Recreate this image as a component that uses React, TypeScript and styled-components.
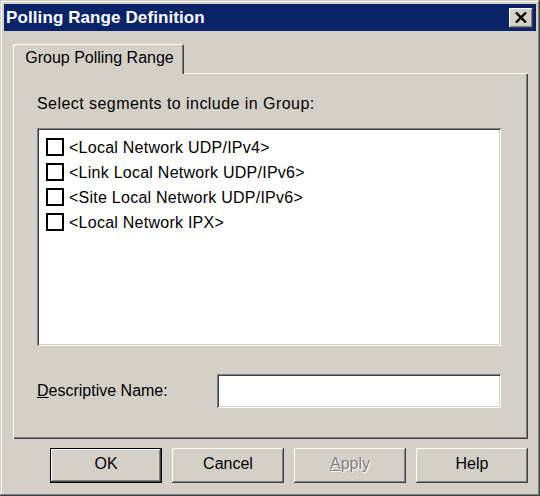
import React from 'react';
import styled, { createGlobalStyle } from 'styled-components';

const GlobalStyle = createGlobalStyle`
  html, body {
    margin: 0;
    padding: 0;
    background: #d4d0c8;
  }
  * {
    box-sizing: border-box;
  }
`;

const raised = `
  box-shadow:
    inset -1px -1px #404040,
    inset 1px 1px #ffffff,
    inset -2px -2px #808080,
    inset 2px 2px #d4d0c8;
`;

const sunken = `
  box-shadow:
    inset 1px 1px #808080,
    inset -1px -1px #ffffff,
    inset 2px 2px #404040,
    inset -2px -2px #d4d0c8;
`;

const Window = styled.div`
  width: 540px;
  height: 496px;
  background: #d4d0c8;
  padding: 4px;
  display: flex;
  flex-direction: column;
  font-family: "Liberation Sans", Arial, sans-serif;
  font-size: 16px;
  color: #000;
  box-shadow:
    inset -1px -1px #404040,
    inset 1px 1px #d4d0c8,
    inset -2px -2px #808080,
    inset 2px 2px #ffffff;
`;

const TitleBar = styled.div`
  height: 27px;
  flex-shrink: 0;
  background: #0a246a;
  display: flex;
  align-items: center;
  justify-content: space-between;
  padding: 0 3px 0 2px;
`;

const Title = styled.span`
  color: #fff;
  font-weight: bold;
  font-size: 17px;
  letter-spacing: 0.1px;
`;

const CloseButton = styled.button`
  width: 24px;
  height: 20px;
  padding: 0;
  border: none;
  background: #d4d0c8;
  display: flex;
  align-items: center;
  justify-content: center;
  ${raised}
`;

const Body = styled.div`
  flex: 1;
  display: flex;
  flex-direction: column;
  padding: 13px 8px 0 9px;
`;

const TabStrip = styled.div`
  display: flex;
  position: relative;
  z-index: 1;
  margin-bottom: -1px;
`;

const Tab = styled.div`
  width: 171px;
  height: 30px;
  background: #d4d0c8;
  border-top-left-radius: 2px;
  border-top-right-radius: 2px;
  display: flex;
  align-items: center;
  justify-content: center;
  padding: 0 0 2px 2px;
  box-shadow:
    inset 1px 1px #ffffff,
    inset -1px 0 #404040,
    inset -2px 0 #808080;
`;

const Panel = styled.div`
  height: 366px;
  display: flex;
  flex-direction: column;
  padding: 22px 27px 0 24px;
  box-shadow:
    inset 1px 1px #ffffff,
    inset -1px -1px #404040,
    inset -2px -2px #808080;
`;

const Caption = styled.div`
  line-height: 18px;
  margin-bottom: 15px;
  letter-spacing: 0.45px;
`;

const ListBox = styled.div`
  height: 218px;
  background: #fff;
  padding: 7px 9px;
  display: flex;
  flex-direction: column;
  ${sunken}
`;

const Item = styled.div`
  height: 25px;
  display: flex;
  align-items: center;
  gap: 5px;
  white-space: nowrap;
  letter-spacing: 0.25px;
`;

const Check = styled.span`
  width: 18px;
  height: 18px;
  border: 2px solid #000;
  background: #fff;
  flex-shrink: 0;
  margin-bottom: 1px;
`;

const FieldRow = styled.div`
  display: flex;
  align-items: center;
  justify-content: space-between;
  margin-top: 28px;
`;

const FieldLabel = styled.label`
  line-height: 18px;
`;

const TextInput = styled.input`
  width: 284px;
  height: 34px;
  border: none;
  background: #fff;
  font: inherit;
  padding: 2px 6px;
  outline: none;
  ${sunken}
`;

const ButtonRow = styled.div`
  display: flex;
  justify-content: flex-end;
  gap: 10px;
  margin-top: 9px;
`;

const Button = styled.button<{ $default?: boolean; $disabled?: boolean }>`
  width: 112px;
  height: 35px;
  border: none;
  padding: 0 0 3px;
  background: #d4d0c8;
  font-family: "Liberation Sans", Arial, sans-serif;
  font-size: 16px;
  color: ${p => (p.$disabled ? '#808080' : '#000')};
  text-shadow: ${p => (p.$disabled ? '1px 1px #ffffff' : 'none')};
  ${p =>
    p.$default
      ? `box-shadow:
          inset 0 0 0 1px #000000,
          inset -2px -2px #404040,
          inset 2px 2px #ffffff,
          inset -3px -3px #808080;`
      : raised}
`;

const items = [
  '<Local Network UDP/IPv4>',
  '<Link Local Network UDP/IPv6>',
  '<Site Local Network UDP/IPv6>',
  '<Local Network IPX>',
];

export default function App() {
  return (
    <>
      <GlobalStyle />
      <Window>
        <TitleBar>
          <Title>Polling Range Definition</Title>
          <CloseButton aria-label="Close">
            <svg width="12" height="11" viewBox="0 0 12 11">
              <path d="M1 0.5 L11 10.5 M11 0.5 L1 10.5" stroke="#000" strokeWidth="2.4" />
            </svg>
          </CloseButton>
        </TitleBar>
        <Body>
          <TabStrip>
            <Tab>Group Polling Range</Tab>
          </TabStrip>
          <Panel>
            <Caption>Select segments to include in Group:</Caption>
            <ListBox>
              {items.map(t => (
                <Item key={t}>
                  <Check />
                  {t}
                </Item>
              ))}
            </ListBox>
            <FieldRow>
              <FieldLabel>
                <u>D</u>escriptive Name:
              </FieldLabel>
              <TextInput />
            </FieldRow>
          </Panel>
          <ButtonRow>
            <Button $default>OK</Button>
            <Button>Cancel</Button>
            <Button $disabled>
              <u>A</u>pply
            </Button>
            <Button>Help</Button>
          </ButtonRow>
        </Body>
      </Window>
    </>
  );
}
